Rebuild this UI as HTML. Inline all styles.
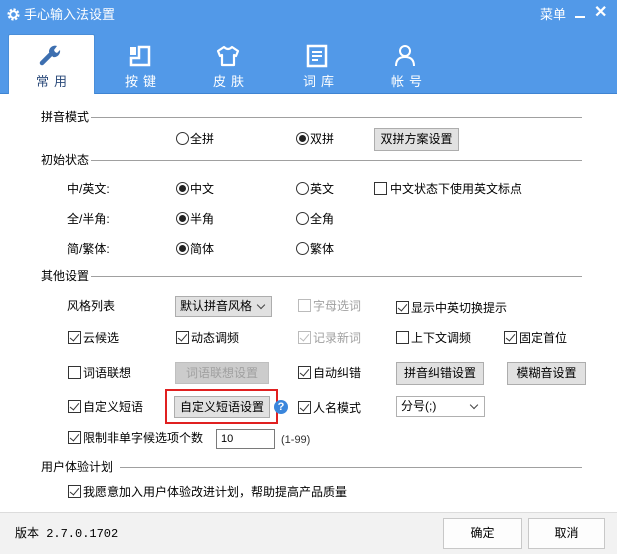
<!DOCTYPE html>
<html><head><meta charset="utf-8"><style>
*{margin:0;padding:0;box-sizing:border-box}
body{width:617px;height:554px;overflow:hidden;background:#fff;font-family:"Liberation Sans","Noto Sans CJK SC",sans-serif;font-size:12px;color:#000;position:relative}
.a{position:absolute;white-space:nowrap;line-height:14px}
.top{position:absolute;left:0;top:0;width:617px;height:94px;background:#5299e8;border-bottom:1px solid #3f84d2}
.w{color:#fff}
.tab{position:absolute;top:34px;left:8px;width:87px;height:60px;background:#fff;border:1px solid #4a8ed8;border-bottom:none;border-radius:2px 2px 0 0}
.tl{position:absolute;top:71px;font-size:13px;letter-spacing:5px;color:#fff;white-space:nowrap}
.hr{position:absolute;height:1px;background:#a0a0a0}
.rb{position:absolute;width:13px;height:13px;border:1px solid #333;border-radius:50%;background:#fff}
.rb.on::after{content:"";position:absolute;left:2px;top:2px;width:7px;height:7px;border-radius:50%;background:#222}
.cb{position:absolute;width:13px;height:13px;border:1px solid #333;background:#fff}
.cb.on::after{content:"";position:absolute;left:3px;top:0px;width:4px;height:8px;border:solid #333;border-width:0 1.5px 1.5px 0;transform:rotate(40deg)}
.cb.dis{border-color:#bbb}.cb.dis::after{border-color:#bbb}
.btn{position:absolute;background:#e1e1e1;border:1px solid #adadad;text-align:center;line-height:20px}
.dd{position:absolute;background:#e1e1e1;border:1px solid #adadad;padding-left:4px;line-height:19px}
.dd::after{content:"";position:absolute;right:7px;top:5px;width:5px;height:5px;border:solid #444;border-width:0 1px 1px 0;transform:rotate(45deg)}
.g{color:#a0a0a0}
</style></head><body>
<div class="top"></div>
<svg class="a" style="left:6px;top:7px" width="15" height="15" viewBox="0 0 16 16"><circle cx="8" cy="8" r="5" fill="none" stroke="#fff" stroke-width="3" stroke-dasharray="2.2 1.7"/><circle cx="8" cy="8" r="3.5" fill="none" stroke="#fff" stroke-width="2"/></svg>
<div class="a w" style="left:24px;top:8px;font-size:13px">手心输入法设置</div>
<div class="a w" style="left:540px;top:8px;font-size:13px">菜单</div>
<div class="a" style="left:575px;top:16px;width:10px;height:2px;background:#fff"></div>
<div class="a w" style="left:594px;top:6px;font-size:16px;font-weight:bold">✕</div>
<div class="tab"></div>
<svg class="a" style="left:39px;top:44px" width="22" height="22" viewBox="0 0 22 22"><path d="M3 19 L12 10" stroke="#3d6fb0" stroke-width="4.5" stroke-linecap="round"/><path d="M10 8 A6 6 0 0 1 18 2 L15 6 L16 8 L18 9 L21 6 A6 6 0 0 1 14 13 Z" fill="#3d6fb0"/></svg>
<div class="tl" style="left:36px;color:#2b4a7a">常用</div>
<svg class="a" style="left:129px;top:45px" width="22" height="22" viewBox="0 0 22 22"><rect x="1" y="2" width="6" height="8" fill="#fff"/><path d="M10 2 H20 V20 H2 V13 H10 Z" fill="none" stroke="#fff" stroke-width="2.5"/></svg>
<div class="tl" style="left:125px">按键</div>
<svg class="a" style="left:216px;top:45px" width="24" height="22" viewBox="0 0 24 22"><path d="M8 2 L2 6 L4 11 L6 10 V20 H18 V10 L20 11 L22 6 L16 2 Q12 6 8 2 Z" fill="none" stroke="#fff" stroke-width="2.2" stroke-linejoin="round"/></svg>
<div class="tl" style="left:213px">皮肤</div>
<svg class="a" style="left:306px;top:44px" width="22" height="24" viewBox="0 0 22 24"><rect x="2" y="2" width="18" height="20" fill="none" stroke="#fff" stroke-width="2.5"/><path d="M6 8 H16 M6 12 H16 M6 16 H12" stroke="#fff" stroke-width="2"/></svg>
<div class="tl" style="left:303px">词库</div>
<svg class="a" style="left:394px;top:44px" width="22" height="24" viewBox="0 0 22 24"><circle cx="11" cy="7" r="5" fill="none" stroke="#fff" stroke-width="2"/><path d="M2 22 Q2 13 11 13 Q20 13 20 22" fill="none" stroke="#fff" stroke-width="2"/></svg>
<div class="tl" style="left:391px">帐号</div>

<div class="a" style="left:41px;top:110px">拼音模式</div><div class="hr" style="left:91px;top:117px;width:491px"></div>
<div class="rb" style="left:176px;top:132px"></div><div class="a" style="left:190px;top:132px">全拼</div>
<div class="rb on" style="left:296px;top:132px"></div><div class="a" style="left:310px;top:132px">双拼</div>
<div class="btn" style="left:374px;top:128px;width:85px;height:23px">双拼方案设置</div>
<div class="a" style="left:41px;top:153px">初始状态</div><div class="hr" style="left:91px;top:160px;width:491px"></div>
<div class="a" style="left:67px;top:182px">中/英文:</div>
<div class="rb on" style="left:176px;top:182px"></div><div class="a" style="left:190px;top:182px">中文</div>
<div class="rb" style="left:296px;top:182px"></div><div class="a" style="left:310px;top:182px">英文</div>
<div class="cb" style="left:374px;top:182px"></div><div class="a" style="left:390px;top:182px">中文状态下使用英文标点</div>
<div class="a" style="left:67px;top:212px">全/半角:</div>
<div class="rb on" style="left:176px;top:212px"></div><div class="a" style="left:190px;top:212px">半角</div>
<div class="rb" style="left:296px;top:212px"></div><div class="a" style="left:310px;top:212px">全角</div>
<div class="a" style="left:67px;top:242px">简/繁体:</div>
<div class="rb on" style="left:176px;top:242px"></div><div class="a" style="left:190px;top:242px">简体</div>
<div class="rb" style="left:296px;top:242px"></div><div class="a" style="left:310px;top:242px">繁体</div>
<div class="a" style="left:41px;top:269px">其他设置</div><div class="hr" style="left:91px;top:276px;width:491px"></div>

<div class="a" style="left:67px;top:299px">风格列表</div>
<div class="dd" style="left:175px;top:296px;width:97px;height:21px">默认拼音风格</div>
<div class="cb dis" style="left:298px;top:299px"></div><div class="a g" style="left:313px;top:299px">字母选词</div>
<div class="cb on" style="left:396px;top:301px"></div><div class="a" style="left:411px;top:301px">显示中英切换提示</div>

<div class="cb on" style="left:68px;top:331px"></div><div class="a" style="left:83px;top:331px">云候选</div>
<div class="cb on" style="left:176px;top:331px"></div><div class="a" style="left:191px;top:331px">动态调频</div>
<div class="cb on dis" style="left:298px;top:331px"></div><div class="a g" style="left:313px;top:331px">记录新词</div>
<div class="cb" style="left:396px;top:331px"></div><div class="a" style="left:411px;top:331px">上下文调频</div>
<div class="cb on" style="left:504px;top:331px"></div><div class="a" style="left:519px;top:331px">固定首位</div>

<div class="cb" style="left:68px;top:366px"></div><div class="a" style="left:83px;top:366px">词语联想</div>
<div class="btn g" style="left:175px;top:362px;width:94px;height:22px;background:#ccc;border-color:#bfbfbf">词语联想设置</div>
<div class="cb on" style="left:298px;top:366px"></div><div class="a" style="left:313px;top:366px">自动纠错</div>
<div class="btn" style="left:396px;top:362px;width:88px;height:23px">拼音纠错设置</div>
<div class="btn" style="left:507px;top:362px;width:79px;height:23px">模糊音设置</div>

<div class="cb on" style="left:68px;top:400px"></div><div class="a" style="left:83px;top:400px">自定义短语</div>
<div class="a" style="left:165px;top:389px;width:113px;height:35px;border:2px solid #e02020"></div>
<div class="btn" style="left:174px;top:396px;width:96px;height:22px">自定义短语设置</div>
<div class="a" style="left:274px;top:400px;width:14px;height:14px;border-radius:50%;background:#3a86dc;color:#fff;font-size:11px;font-weight:bold;text-align:center;line-height:14px">?</div>
<div class="cb on" style="left:298px;top:401px"></div><div class="a" style="left:313px;top:401px">人名模式</div>
<div class="dd" style="left:396px;top:396px;width:89px;height:21px;background:#fff;border-color:#b0b0b0">分号(;)</div>

<div class="cb on" style="left:68px;top:431px"></div><div class="a" style="left:83px;top:431px">限制非单字候选项个数</div>
<div class="a" style="left:216px;top:429px;width:59px;height:20px;border:1px solid #7a7a7a;padding-left:4px;line-height:18px;font-size:11px">10</div>
<div class="a" style="left:281px;top:433px;font-size:11px;color:#333">(1-99)</div>

<div class="a" style="left:41px;top:460px">用户体验计划</div><div class="hr" style="left:120px;top:467px;width:462px"></div>
<div class="cb on" style="left:68px;top:485px"></div><div class="a" style="left:83px;top:485px">我愿意加入用户体验改进计划，帮助提高产品质量</div>

<div class="a" style="left:0;top:512px;width:617px;height:42px;background:#f2f2f2;border-top:1px solid #dcdcdc"></div>
<div class="a" style="left:15px;top:527px;font-family:'Liberation Mono','Noto Sans CJK SC',monospace;font-size:12px">版本 2.7.0.1702</div>
<div class="btn" style="left:443px;top:518px;width:79px;height:31px;line-height:29px;background:#fdfdfd;border-color:#c8c8c8">确定</div>
<div class="btn" style="left:528px;top:518px;width:77px;height:31px;line-height:29px;background:#fdfdfd;border-color:#c8c8c8">取消</div>
</body></html>
